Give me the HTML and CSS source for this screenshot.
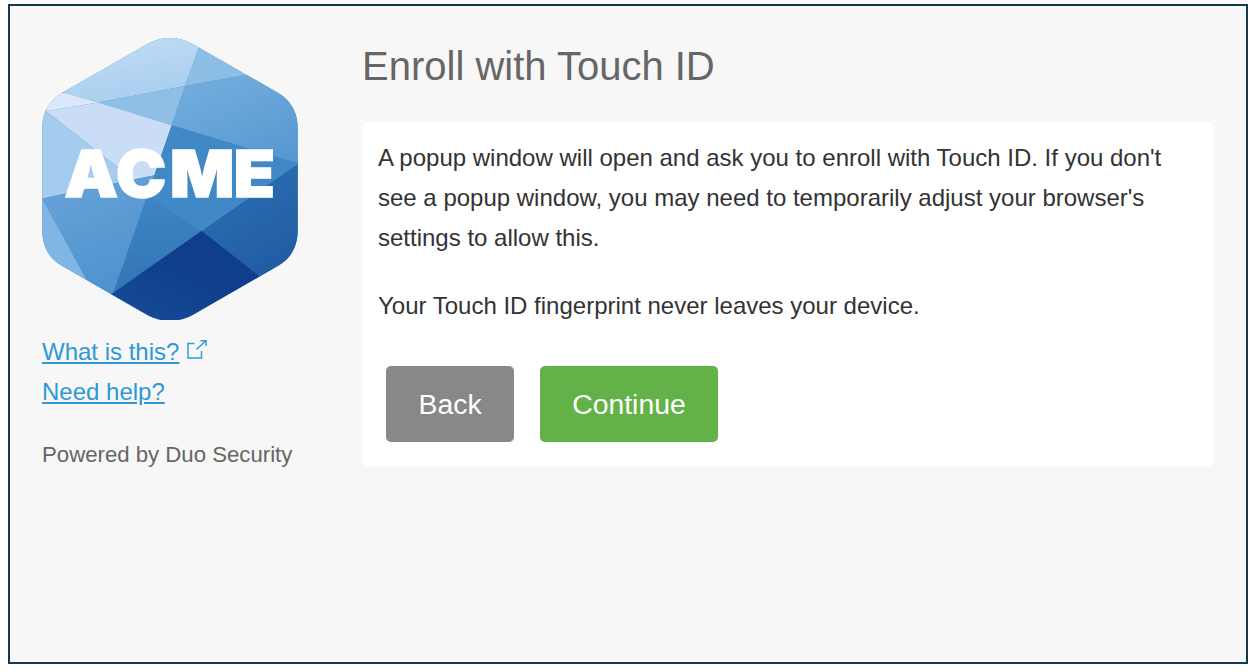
FILE: index.html
```html
<!DOCTYPE html>
<html lang="en">
<head>
  <meta charset="UTF-8">
  <meta name="viewport" content="width=device-width, initial-scale=1.0">
  <title>Enroll with Touch ID</title>
  <link rel="stylesheet" href="styles.css">
</head>
<body>

  <div class="frame">
    <div class="sidebar">
      <svg class="logo" viewBox="36 38 768 847" width="256" height="282" role="img" aria-label="ACME">
        <defs>
          <clipPath id="hex">
            <path d="M352 56 C395 32 445 32 488 56 L745 203 C785 226 804 265 804 310 L804 615 C804 660 785 700 745 722 L488 870 C445 893 395 893 352 870 L95 722 C55 700 36 660 36 615 L36 310 C36 265 55 226 95 203 Z"/>
          </clipPath>
          <linearGradient id="gTop" x1="0.3" y1="0" x2="0.7" y2="1">
            <stop offset="0" stop-color="#c6dff6"/>
            <stop offset="1" stop-color="#a6cdee"/>
          </linearGradient>
          <linearGradient id="gRight" x1="0.2" y1="0" x2="0.8" y2="1">
            <stop offset="0" stop-color="#76afdf"/>
            <stop offset="1" stop-color="#5596cf"/>
          </linearGradient>
          <linearGradient id="gLower" x1="0.3" y1="0" x2="0.7" y2="1">
            <stop offset="0" stop-color="#66a2d8"/>
            <stop offset="1" stop-color="#4c91cd"/>
          </linearGradient>
          <linearGradient id="gMid" x1="0.4" y1="0" x2="0.5" y2="1">
            <stop offset="0" stop-color="#3d86c3"/>
            <stop offset="1" stop-color="#3274b5"/>
          </linearGradient>
          <linearGradient id="gSide" x1="0.3" y1="0" x2="0.8" y2="1">
            <stop offset="0" stop-color="#2c70b3"/>
            <stop offset="1" stop-color="#1f589f"/>
          </linearGradient>
          <linearGradient id="gBottom" x1="0.7" y1="0.5" x2="0.3" y2="1">
            <stop offset="0" stop-color="#0f3f8c"/>
            <stop offset="1" stop-color="#174d97"/>
          </linearGradient>
        </defs>
        <g clip-path="url(#hex)">
          <rect x="0" y="0" width="840" height="915" fill="#4189c6"/>
          <polygon points="420,0 520,30 465,182 205,232 105,203 60,180" fill="url(#gTop)"/>
          <polygon points="520,30 820,117 465,182" fill="#8dbfe6"/>
          <polygon points="205,232 465,182 425,300" fill="#8fbfe7"/>
          <polygon points="465,182 820,117 860,265 860,432 425,300" fill="url(#gRight)"/>
          <polygon points="48,258 205,232 425,300 373,450 310,463" fill="#c9ddf6"/>
          <polygon points="105,203 205,232 48,258 60,200" fill="#dbe7fb"/>
          <polygon points="20,255 48,258 310,463 36,520 20,520" fill="#a3ccef"/>
          <polygon points="425,300 840,425 515,617 352,510 373,450" fill="#4189c6"/>
          <polygon points="36,520 373,450 352,510 250,803 240,815 172,770" fill="url(#gLower)"/>
          <polygon points="20,520 36,520 172,770 60,770 20,700" fill="#7fb6e3"/>
          <polygon points="352,510 515,617 250,803" fill="url(#gMid)"/>
          <polygon points="840,392 840,800 720,777 515,617" fill="url(#gSide)"/>
          <polygon points="515,617 720,777 470,950 200,838" fill="url(#gBottom)"/>
        </g>
        <text class="logo-text" x="99 248 404 588" y="517" transform="scale(1.04 1)">ACME</text>
      </svg>

      <a class="side-link link-first" href="#">What is this?</a>
      <svg class="ext-icon" viewBox="0 0 20 20" width="20" height="20" aria-hidden="true">
        <path d="M7.500 4.500 H1 V19 H14.500 V12 M9.500 10.500 L18.500 2 M13.500 1.700 H19 V7" fill="none" stroke="#3a9bd5" stroke-width="1.500"/>
      </svg>
      <a class="side-link" href="#">Need help?</a>
      <p class="powered">Powered by Duo Security</p>
    </div>

    <div class="main">
      <h1>Enroll with Touch ID</h1>
      <div class="card">
        <p>A popup window will open and ask you to enroll with Touch ID. If you don't see a popup window, you may need to temporarily adjust your browser's settings to allow this.</p>
        <p>Your Touch ID fingerprint never leaves your device.</p>
        <div class="actions">
          <button class="btn btn-back">Back</button>
          <button class="btn btn-continue">Continue</button>
        </div>
      </div>
    </div>
  </div>

</body>
</html>
```

FILE: styles.css
```css
body {
  margin: 0;
  background-color: #fff;
  font-family: "Liberation Sans", Arial, sans-serif;
}

.frame {
  display: flex;
  box-sizing: border-box;
  width: 1240px;
  height: 660px;
  margin: 4px 0 0 8px;
  border: 2px solid #13384f;
  background-color: #f7f7f7;
}

.sidebar {
  width: 320px;
  margin-left: 32px;
  padding-top: 32px;
  flex-shrink: 0;
}

.logo {
  display: block;
  margin-bottom: 12px;
}

.logo-text {
  font-family: Inter, "Liberation Sans", sans-serif;
  font-size: 194px;
  font-weight: 900;
  fill: #fff;
  stroke: #fff;
  stroke-width: 5px;
}

.side-link {
  font-size: 24px;
  line-height: 40px;
  color: #2f99d5;
}

.link-first {
  margin-right: 3px;
}

.side-link:not(.link-first) {
  display: block;
}

.ext-icon {
  vertical-align: 1px;
}

.powered {
  margin: 28px 0 0;
  font-size: 22.2px;
  line-height: 30px;
  color: #666;
}

.main {
  width: 852px;
}

h1 {
  margin: 36px 0 32px;
  font-size: 40px;
  line-height: 48px;
  font-weight: normal;
  color: #666;
}

.card {
  padding: 16px 16px 24px;
  background-color: #fff;
  border-radius: 6px;
}

.card p {
  margin: 0 0 28px;
  font-size: 24px;
  line-height: 40px;
  color: #333;
}

.actions {
  display: flex;
  gap: 26px;
  margin: 40px 0 0 8px;
}

.btn {
  height: 76px;
  padding: 0 32.5px;
  border: none;
  border-radius: 5px;
  font-family: inherit;
  font-size: 28.4px;
  color: #fff;
  cursor: pointer;
}

.btn-back {
  background-color: #888;
}

.btn-continue {
  padding: 0 32px;
  background-color: #63b247;
}
```
